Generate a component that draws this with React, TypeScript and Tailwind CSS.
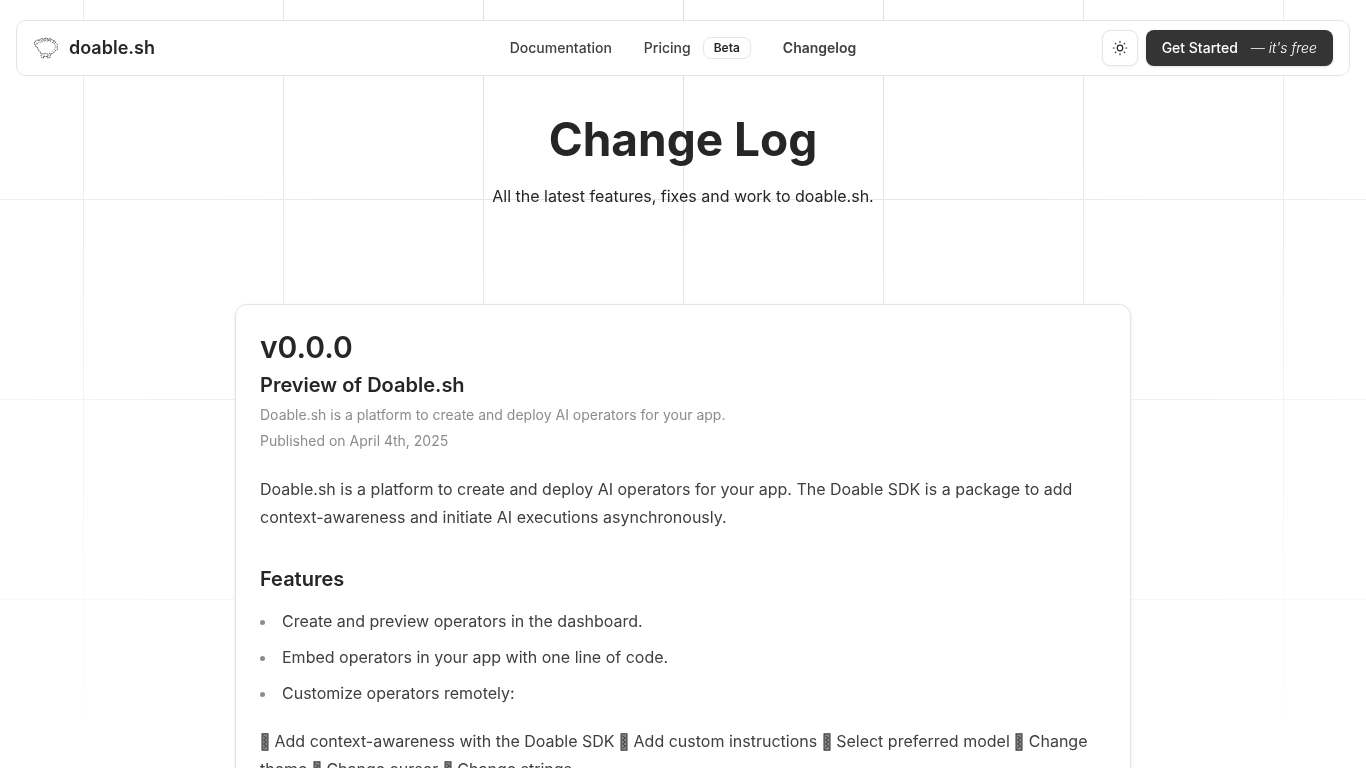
import React from 'react';

const features = [
  'Create and preview operators in the dashboard.',
  'Embed operators in your app with one line of code.',
  'Customize operators remotely:',
];

const options = [
  'Add context-awareness with the Doable SDK',
  'Add custom instructions',
  'Select preferred model',
  'Change theme',
  'Change cursor',
  'Change strings',
];

function GridBackground() {
  return (
    <svg
      aria-hidden="true"
      className="fixed inset-0 -z-10 h-full w-full stroke-[#dcdcdc] [mask-image:radial-gradient(100%_110%_at_top_center,white,transparent)]"
    >
      <defs>
        <pattern id="grid" width="200" height="200" x="50%" y="-1" patternUnits="userSpaceOnUse">
          <path d="M.5 200V.5H200" fill="none" />
        </pattern>
      </defs>
      <rect width="100%" height="100%" strokeWidth="0" fill="url(#grid)" />
    </svg>
  );
}

function SheepLogo() {
  return (
    <svg viewBox="0 0 26 24" className="h-6 w-[26px]" fill="none" stroke="#444" strokeWidth="0.8" aria-hidden="true">
      <path
        strokeDasharray="2 0.6"
        d="M2 5.5 4 4l2 .5L8 2.500l2.500.5L13 2l2.500 1L18 2.500l1.500 1.800 2.500.7.500 1.500 2 2-.5 3 .5 2-2.500 1.500-2 2.500-3 .5"
      />
      <path
        strokeDasharray="1.5 0.7"
        d="M3.500 8 6 6l2.500.2L11 4.500l3 .8 2.500-.8L19 6.500l2.500 1 1 3-1 2.500-2.500 2.500"
        strokeWidth="0.6"
      />
      <path d="M2 5.500 1 8l1.500.8.5 2.200 1.500.5L5 14l2 1.500 1 2" strokeDasharray="2 0.5" />
      <path
        d="M7 16.500 9.500 18l3-.5 3 .8 2-1.300M8 18.500l.5 3 2 .5.5-2.500M15 19l-.5 3 2.500-.5.5-3M10.500 20.500h4"
        strokeDasharray="1.8 0.5"
      />
      <path
        d="M3 7l1.500 1M6 3.500 7 5M10 3l1 2M14 2.500l.5 2M18 3l-.5 2.500M21 5l-1.500 2M8 3.500l1 2M12 2.500l.5 2M16 3l-.5 2"
        strokeWidth="0.6"
      />
    </svg>
  );
}

function SunIcon() {
  return (
    <svg viewBox="0 0 16 16" className="size-4" fill="none" stroke="currentColor" strokeLinecap="round" aria-hidden="true">
      <circle cx="8" cy="8" r="2.8" strokeWidth="1.2" />
      <path
        strokeWidth="1.2"
        d="M8 1.300v.9M8 13.800v.9M1.300 8h.9M13.800 8h.9M3.300 3.300l.6.6M12.100 12.100l.6.6M3.300 12.700l.6-.6M12.100 3.900l.6-.6"
      />
    </svg>
  );
}

function OptionMark() {
  return (
    <svg viewBox="0 0 10 18" className="inline-block h-[18px] w-[10px] align-[-4px]" aria-hidden="true">
      <rect x="2" y="0.8" width="6" height="16.4" fill="#888" stroke="#333" />
      <path d="M3.500 3l3 2-3 2 3 2-3 2 3 2-3 2" fill="none" stroke="#333" strokeWidth="0.9" />
    </svg>
  );
}

function Header() {
  return (
    <header className="sticky top-5 z-50 mx-4 flex h-14 items-center rounded-[10px] border border-neutral-200 bg-white/95 px-4">
      <div className="flex flex-1">
        <a href="#" className="flex items-center gap-[10px] text-lg font-semibold">
          <SheepLogo />
          doable.sh
        </a>
      </div>
      <nav className="flex items-center gap-8 text-sm font-medium text-neutral-700">
        <a href="#docs">Documentation</a>
        <a href="#pricing" className="flex items-center gap-3">
          Pricing
          <span className="rounded-lg border border-neutral-200 px-[10px] py-[2px] text-xs font-semibold text-neutral-800">
            Beta
          </span>
        </a>
        <a href="#changelog" className="font-semibold">
          Changelog
        </a>
      </nav>
      <div className="flex flex-1 justify-end gap-2">
        <button
          aria-label="Toggle theme"
          className="flex size-9 items-center justify-center rounded-lg border border-neutral-200 bg-white shadow-xs"
        >
          <SunIcon />
        </button>
        <a
          href="#start"
          className="flex h-9 items-center gap-[13px] rounded-lg bg-[#343434] px-4 text-sm font-medium text-white shadow-sm"
        >
          Get Started
          <span className="font-light italic">— it's free</span>
        </a>
      </div>
    </header>
  );
}

function App() {
  return (
    <div className="min-h-screen pt-5 font-[Inter,sans-serif] text-neutral-800">
      <GridBackground />
      <Header />

      <main className="px-4">
        <div className="pt-10 text-center">
          <h1 className="text-[46px] leading-[46px] font-bold">Change Log</h1>
          <p className="mt-[22px]">All the latest features, fixes and work to doable.sh.</p>
        </div>

        <article className="mx-auto mt-24 max-w-4xl rounded-xl border border-neutral-200 bg-white p-6 shadow-sm">
          <h2 className="text-3xl font-semibold">v0.0.0</h2>
          <h3 className="mt-[6px] text-xl font-semibold">Preview of Doable.sh</h3>
          <p className="mt-[6px] text-sm text-[#8c8c8c]">
            Doable.sh is a platform to create and deploy AI operators for your app.
          </p>
          <p className="mt-[6px] text-sm text-[#8c8c8c]">Published on April 4th, 2025</p>

          <div className="mt-6 leading-7 text-neutral-700">
            <p>
              Doable.sh is a platform to create and deploy AI operators for your app. The Doable SDK is a package to add
              context-awareness and initiate AI executions asynchronously.
            </p>
            <h4 className="mt-[34px] text-xl font-semibold text-neutral-800">Features</h4>
            <ul className="mt-[14px] list-disc space-y-2 pl-[17px] marker:text-[#8c8c8c]">
              {features.map((feature) => (
                <li key={feature} className="pl-[5px]">
                  {feature}
                </li>
              ))}
            </ul>
            <p className="mt-5">
              {options.map((option) => (
                <React.Fragment key={option}>
                  <OptionMark /> {option}{' '}
                </React.Fragment>
              ))}
            </p>
          </div>
        </article>
      </main>
    </div>
  );
}

export default App;
